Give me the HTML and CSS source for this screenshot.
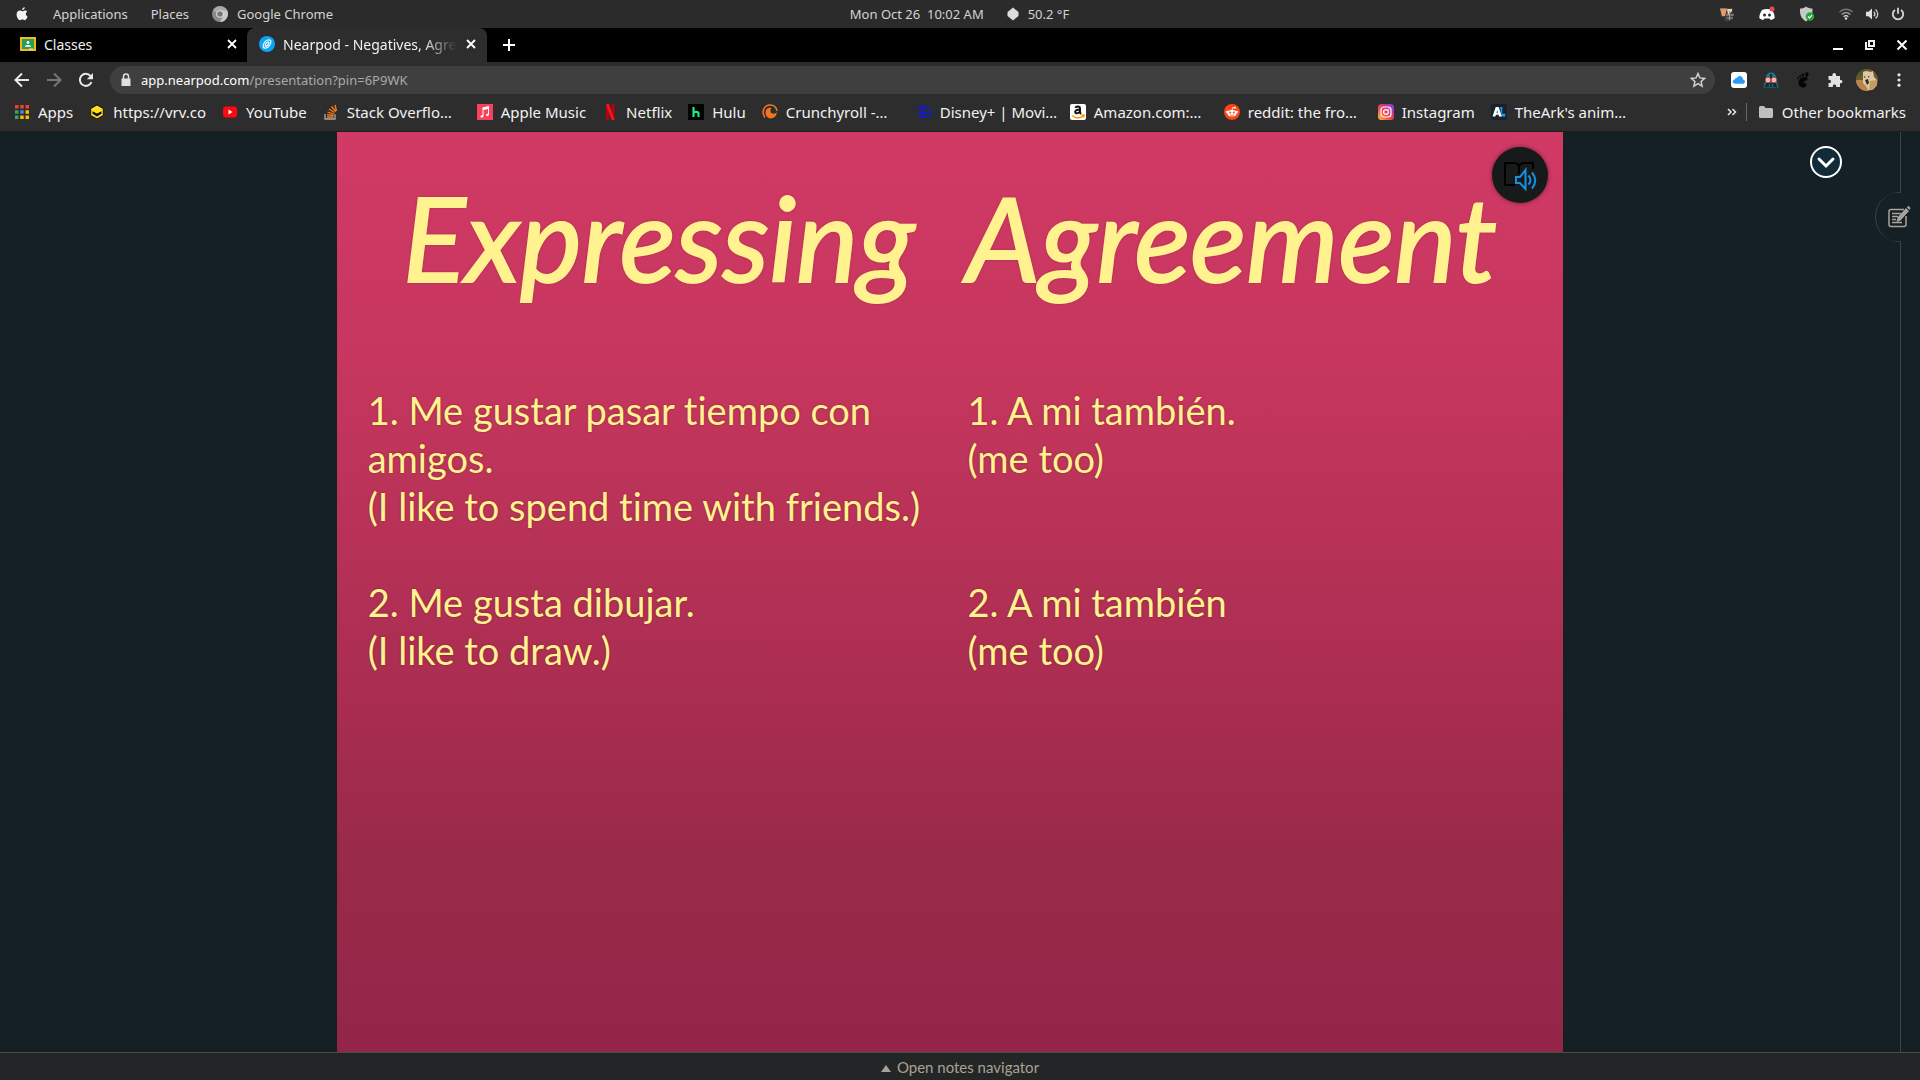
FILE: index.html
```html
<!DOCTYPE html>
<html lang="en">
<head>
<meta charset="utf-8">
<title>Nearpod - Negatives, Agreement</title>
<link rel="stylesheet" href="styles.css">
</head>
<body>
<header>
  <div class="sysbar">
    <nav class="sys-left">
      <svg class="i16" viewBox="0 0 16 16"><path fill="#f2f2f2" d="M10.8 1.2c.1 1.6-1.300 2.900-2.700 2.800C8 2.500 9.300 1.300 10.800 1.200zM13.200 5.600c-1.900 1.200-1.700 4 .4 4.900-.6 1.700-1.700 3.700-2.900 3.700-.9 0-1.200-.6-2.300-.6s-1.500.6-2.300.6C4.300 14.200 2.600 10.900 2.600 8.500c0-2.500 1.600-3.900 3.200-3.900 1.100 0 1.900.7 2.600.7s1.600-.8 2.900-.8c.8 0 1.500.4 1.900 1.100z"/></svg>
      <a href="#">Applications</a>
      <a href="#">Places</a>
      <a href="#" class="current"><svg class="i16" viewBox="0 0 16 16"><circle cx="8" cy="8" r="8" fill="#8b8b8b"/><path fill="#c9c9c9" d="M8 4.200h7a8 8 0 0 1-7 11.800l3.300-6z"/><path fill="#a9a9a9" d="M1.200 4A8 8 0 0 1 15 4.200H8A3.800 3.800 0 0 0 4.500 7z"/><circle cx="8" cy="8" r="3.800" fill="#e0e0e0"/><circle cx="8" cy="8" r="2.800" fill="#777"/></svg>Google Chrome</a>
    </nav>
    <div class="sys-mid">
      <time>Mon Oct 26&nbsp; 10:02 AM</time>
      <span class="weather"><svg class="i14" viewBox="0 0 14 14"><path fill="#ddd" d="M7 .5l3 2.500 2.500 2v4L10 11l-3 2.500L4 11 1.500 9V5L4 3z"/></svg>50.2 °F</span>
    </div>
    <div class="sys-right">
      <svg class="i16" viewBox="0 0 16 16"><path fill="#493e40" d="M1 2h13v9l-2 4H6L5 11H2z"/><path fill="#e59b6b" d="M1 2.500h7L6 10H3z"/><path fill="#f4d1a4" d="M8 3h5v2L9 9z"/><path stroke="#97a5ad" d="M10.500 5v9M7 9h8M8 12h6"/></svg>
      <svg class="i16" viewBox="0 0 16 16"><path fill="#fff" d="M3 4c3-1.500 7-1.500 10 0 1.700 2.500 2.700 5 2.700 8-1.200 1-2.700 1.800-4 2l-1-1.600H5.300l-1 1.600c-1.500-.2-2.800-1-4-2C.4 9 1.300 6.500 3 4z"/><circle cx="5.500" cy="9" r="1.500" fill="#2b2b2b"/><circle cx="10.500" cy="9" r="1.500" fill="#2b2b2b"/><circle cx="13" cy="3" r="2.500" fill="#f04747"/></svg>
      <svg class="i16" viewBox="0 0 16 16"><path fill="#c9c9c9" d="M7 .5c2 1.500 4 2 6.500 2 .3 6-1.500 10-6.500 13C2 12.500.700 8.500 1 2.500c2.500 0 4.500-.5 6-2z"/><circle cx="11" cy="10.500" r="4.200" fill="#1fa83c"/><path d="M9 10.500l1.500 1.500 2.500-2.800" fill="none" stroke="#fff" stroke-width="1.200"/></svg>
      <div class="sys-status">
        <svg class="i14" viewBox="0 0 14 14" fill="none" stroke-width="1.300"><path stroke="#777" d="M.5 5c3.700-3.700 9.300-3.700 13 0"/><path stroke="#aaa" d="M2.700 7.500c2.400-2.400 6.200-2.400 8.600 0"/><path stroke="#ddd" d="M4.700 9.700c1.300-1.200 3.300-1.200 4.600 0"/><circle cx="7" cy="11.500" r="1.200" fill="#ddd"/></svg>
        <svg class="i14" viewBox="0 0 14 14"><path fill="#e0e0e0" d="M1 4.700h2.500L7 1.500v11L3.500 9.300H1z"/><path fill="none" stroke="#d0d0d0" stroke-width="1.300" d="M8.800 4.700c1.400 1.400 1.400 3.200 0 4.600M10.500 2.500c3 2.500 3 6.500 0 9"/></svg>
        <svg class="i14" viewBox="0 0 14 14" fill="none" stroke="#d8d8d8" stroke-width="1.800"><path d="M4 3a5.200 5.200 0 1 0 6 0M7 .7v6"/></svg>
      </div>
    </div>
  </div>

  <div class="tabs">
    <div class="tab">
      <svg class="i16" viewBox="0 0 16 16"><path fill="#f5ba15" d="M0 1h16v14H0z"/><path fill="#2a9d5c" d="M2 3h12v10H2z"/><circle cx="8" cy="6.500" r="1.400" fill="#fff"/><path fill="#fff" d="M4.800 10.800c0-2.500 6.400-2.500 6.400 0z"/><path fill="#e8e8e8" d="M9 12.500h4v1H9z"/></svg>
      <span class="tab-title">Classes</span>
      <button class="icon-btn" aria-label="Close tab"><svg class="i12" viewBox="0 0 12 12"><path stroke="#fff" stroke-width="1.800" d="M2 2l8 8M10 2l-8 8"/></svg></button>
    </div>
    <div class="tab active">
      <svg class="i16" viewBox="0 0 16 16"><circle cx="8" cy="8" r="8" fill="#0ba5f5"/><path fill="none" stroke="#fff" stroke-width="1.200" d="M4.300 11.200C3.600 8.500 6 4.500 8.800 4c1.600-.2 2.800.1 3 1 .6 2.500-2 6.500-4.600 7-1.500.2-2.600 0-2.900-.8zM6.300 10c-.4-1.500 1-3.700 2.500-3.900 1.300-.1 1.200.5 1 1.200-.5 1.500-1.600 2.700-2.600 2.900-.5.100-.8 0-.9-.2z"/></svg>
      <span class="tab-title fade">Nearpod - Negatives, Agre</span>
      <button class="icon-btn" aria-label="Close tab"><svg class="i12" viewBox="0 0 12 12"><path stroke="#fff" stroke-width="1.800" d="M2 2l8 8M10 2l-8 8"/></svg></button>
    </div>
    <button class="icon-btn new-tab" aria-label="New tab"><svg class="i12" viewBox="0 0 12 12"><path stroke="#fff" stroke-width="2" d="M6 0v12M0 6h12"/></svg></button>
    <div class="win">
      <button class="icon-btn" aria-label="Minimize"><svg class="i12" viewBox="0 0 12 12"><path fill="#fff" d="M1 9h10v2H1z"/></svg></button>
      <button class="icon-btn" aria-label="Restore"><svg class="i12" viewBox="0 0 12 12"><path fill="none" stroke="#eee" stroke-width="2" d="M5 2h5v5H5zM2 3v7h7"/></svg></button>
      <button class="icon-btn" aria-label="Close window"><svg class="i12" viewBox="0 0 12 12"><path stroke="#fff" stroke-width="2" d="M1.500 1.500l9 9M10.500 1.500l-9 9"/></svg></button>
    </div>
  </div>

  <div class="toolbar">
    <button class="icon-btn" aria-label="Back"><svg class="i16" viewBox="0 0 16 16" fill="none" stroke="#e8e8e8" stroke-width="2"><path d="M15 8H2.500M8 1.500L1.500 8 8 14.500"/></svg></button>
    <button class="icon-btn" aria-label="Forward"><svg class="i16" viewBox="0 0 16 16" fill="none" stroke="#777" stroke-width="2"><path d="M1 8h12.500M8 1.500L14.500 8 8 14.500"/></svg></button>
    <button class="icon-btn" aria-label="Reload"><svg class="i16" viewBox="0 0 16 16"><path fill="none" stroke="#e8e8e8" stroke-width="2" d="M13.500 10A6 6 0 1 1 12.500 4"/><path fill="#e8e8e8" d="M15 1v6.200H8.800z"/></svg></button>
    <div class="address">
      <svg class="i14" viewBox="0 0 14 14"><path fill="#e0e0e0" d="M2.500 5.500h9V13h-9z"/><path fill="none" stroke="#e0e0e0" stroke-width="1.500" d="M4.500 6V3.500a2.500 2.500 0 0 1 5 0V6"/></svg>
      <a href="#" class="url">app.nearpod.com<span>/presentation?pin=6P9WK</span></a>
      <button class="icon-btn" aria-label="Bookmark this tab"><svg class="i16" viewBox="0 0 16 16"><path fill="none" stroke="#d0d0d0" stroke-width="1.500" d="M8 1.500l1.900 4.400 4.700.5-3.500 3.100 1 4.700L8 11.700l-4.100 2.500 1-4.700L1.400 6.400l4.700-.5z"/></svg></button>
    </div>
    <div class="ext">
      <svg class="i16" viewBox="0 0 16 16"><rect width="16" height="16" rx="3" fill="#fff"/><path fill="#2d9bf5" d="M4.500 11.800C1 11.800 1 8 3.700 7.600 4 6 5.300 5.700 6 6c1.600-3.300 6-2 6 1.400 2.800.4 2.500 4.400-.3 4.400z"/></svg>
      <svg class="i16" viewBox="0 0 16 16"><path fill="#16798a" d="M2.500 7C3 2 5 .5 8 .5S13 2 13.500 7l2 8.500H.500z"/><path fill="#142c36" d="M3 11h10l1.500 4h-13zM7 2h2v4H7z"/><path fill="#16798a" d="M6 12h1v3H6zM9 12h1v3H9z"/><circle cx="5" cy="8" r="3" fill="#e0452f"/><circle cx="11" cy="8" r="3" fill="#e0452f"/><circle cx="5" cy="8" r="1.900" fill="#fff"/><circle cx="11" cy="8" r="1.900" fill="#fff"/><circle cx="5" cy="8" r=".8" fill="#c33"/><circle cx="11" cy="8" r=".8" fill="#c33"/></svg>
      <svg class="i16" viewBox="0 0 16 16" fill="#050505"><path d="M12.500 7c0-3.500-9-2-9 3.500 0 6 8 6.500 8 2.300 0-2.300-2.700-1.300-3-2.800-.2-1.500 4-1 4-3z"/><ellipse cx="11.800" cy="2.600" rx="1.800" ry="2.300"/><ellipse cx="7.900" cy="3" rx="1.100" ry="1.600"/><ellipse cx="5.200" cy="4.300" rx=".9" ry="1.300"/><ellipse cx="3" cy="6.200" rx=".8" ry="1.100"/></svg>
      <svg class="i16" viewBox="0 0 16 16"><path fill="#e2e2e2" d="M1.500 4h4c-1-4 4.500-4 3.500 0h4v4c3.300-.8 3.300 4 0 3.200V15H9.200c.7-3.300-4-3.300-3.300 0H1.500v-4c3.300.8 3.300-4 0-3.200z"/></svg>
      <svg class="avatar" viewBox="0 0 22 22"><clipPath id="av"><circle cx="11" cy="11" r="11"/></clipPath><g clip-path="url(#av)"><path fill="#75572f" d="M0 0h22v22H0z"/><path fill="#466226" d="M0 0h8v5L0 10z"/><path fill="#b98450" d="M0 11h8l5 11H0z"/><path fill="#dcc9a4" d="M7 3l3-1 5 1 2-1 1 6 3 3v10h-9l-2-4-3-3V7z"/><path fill="#c49c66" d="M14 12l7-1v9l-8 1z"/><path fill="#3b2a20" d="M9 11l3-1 1 4-2 2z"/><circle cx="8.700" cy="8" r=".7" fill="#30241d"/><circle cx="12.700" cy="7.700" r=".7" fill="#30241d"/></g></svg>
      <button class="icon-btn" aria-label="Menu"><svg class="i16" viewBox="0 0 16 16" fill="#e8e8e8"><circle cx="8" cy="2.800" r="1.600"/><circle cx="8" cy="8" r="1.600"/><circle cx="8" cy="13.200" r="1.600"/></svg></button>
    </div>
  </div>

  <nav class="bookmarks">
    <a href="#"><svg class="i16" viewBox="0 0 16 16"><path fill="#ea4335" d="M1 1h3.500v3.500H1zM6.200 1h3.500v3.500H6.200zM11.500 1H15v3.500h-3.500z"/><path fill="#34a853" d="M1 6.200h3.500v3.500H1zM1 11.500h3.500V15H1z"/><path fill="#4285f4" d="M6.200 6.200h3.500v3.500H6.200z"/><path fill="#fbbc05" d="M11.500 6.200H15v3.500h-3.500zM6.200 11.500h3.500V15H6.200zM11.500 11.500H15V15h-3.500z"/></svg><span>Apps</span></a>
    <a href="#"><svg class="i16" viewBox="0 0 16 16"><path fill="#fd2" stroke="#111" d="M8 1l6.300 3.500v7L8 15l-6.300-3.500v-7z"/><path fill="#111" d="M3.500 7.300L8 9.500l4.500-2.200v2.400L8 12.400 3.500 9.700z"/></svg><span>https://vrv.co</span></a>
    <a href="#"><svg class="i16" viewBox="0 0 16 16"><rect x="1" y="2.500" width="14" height="11" rx="3" fill="#ff0710"/><path fill="#fff" d="M6.500 5.500v5l4-2.500z"/></svg><span>YouTube</span></a>
    <a href="#" class="long"><svg class="i16" viewBox="0 0 16 16" fill="none"><path stroke="#aaa" stroke-width="1.300" d="M2 10v5h10v-5"/><path stroke="#f48024" stroke-width="1.300" d="M4 13h6.500M4 10.700l6.500.8M4.500 8l6.300 2M6 5l5.500 3.500M8.500 2.500l4.300 5M12 1l1.500 6"/></svg><span>Stack Overflo…</span></a>
    <a href="#"><svg class="i16" viewBox="0 0 16 16"><path fill="#fb405b" d="M0 0h16v16H0z"/><path fill="#fff" d="M5.500 3.500L12 2v8.500c0 2-3 2.200-3 .6 0-1 .8-1.400 2-1.600V5L6.500 6v6c0 2-3 2.200-3 .6 0-1 .8-1.400 2-1.600z"/></svg><span>Apple Music</span></a>
    <a href="#"><svg class="i16" viewBox="0 0 16 16"><path fill="#b1060f" d="M4 0h3v16H4zM9.500 0h3v16h-3z"/><path fill="#f5131d" d="M4 0h3l5.500 16h-3z"/></svg><span>Netflix</span></a>
    <a href="#"><svg class="i16" viewBox="0 0 16 16"><path d="M0 0h16v16H0z"/><path fill="none" stroke="#1ce783" stroke-width="2.200" d="M5.500 3v10M10.500 13V9.300c0-2-5-2-5 0"/></svg><span>Hulu</span></a>
    <a href="#" class="long"><svg class="i16" viewBox="0 0 16 16"><path fill="none" stroke="#f47521" stroke-width="1.600" d="M3 13.500C-1 8 2 1 8 1c4 0 6.500 2.500 7 6"/><path fill="#f47521" d="M9.500 4C4 2.500 1.500 9 5.300 13 9 16.500 15.500 13 14.500 8 14 10 9.500 10.500 8.600 8c-.6-2 .4-3.500.9-4z"/></svg><span>Crunchyroll -…</span></a>
    <a href="#" class="long"><svg class="i16" viewBox="0 0 16 16" fill="none" stroke="#1018dc" stroke-width="1.500"><path d="M1 3.500C5 0 15 4 15 9c0 4.500-11 5-12 2.300C2.500 9 8 8 12 9M3 6l6-.5M7.500 5v8"/></svg><span>Disney+ | Movi…</span></a>
    <a href="#" class="long"><svg class="i16" viewBox="0 0 16 16"><rect width="16" height="16" rx="2" fill="#fff"/><path fill="none" stroke="#111" stroke-width="2" d="M5.500 4c.5-2 4.500-2 4.500.5V8c0 1 .5 1.500 1 2M10 5.500c-3 0-4.800.7-4.800 2.500S9 10 10 7"/><path fill="none" stroke="#f90" stroke-width="1.500" d="M2 11.500c4 3 8 3 11.500.5M11.500 11.300l2.500-.3-.5 2.500"/></svg><span>Amazon.com:…</span></a>
    <a href="#" class="long"><svg class="i16" viewBox="0 0 16 16"><circle cx="8" cy="8" r="8" fill="#ff4516"/><g fill="#fff"><ellipse cx="8" cy="9.300" rx="4.600" ry="3.300"/><circle cx="3.300" cy="8" r="1.300"/><circle cx="12.700" cy="8" r="1.300"/><circle cx="11" cy="3.700" r="1"/></g><path stroke="#fff" fill="none" stroke-width=".8" d="M8 6.500l.6-3 2.400.3"/><circle cx="6.200" cy="8.600" r="1" fill="#ff4516"/><circle cx="9.800" cy="8.600" r="1" fill="#ff4516"/><path stroke="#ff4516" fill="none" stroke-width=".7" d="M6 10.800c1.200.9 2.800.9 4 0"/></svg><span>reddit: the fro…</span></a>
    <a href="#"><svg class="i16" viewBox="0 0 16 16"><linearGradient id="ig" x1="0" y1="1" x2="1" y2="0"><stop offset="0" stop-color="#fdc84b"/><stop offset=".35" stop-color="#f5573b"/><stop offset=".65" stop-color="#cf2f91"/><stop offset="1" stop-color="#6550db"/></linearGradient><rect width="16" height="16" rx="3.500" fill="url(#ig)"/><g fill="none" stroke="#fff" stroke-width="1.200"><rect x="3" y="3" width="10" height="10" rx="3"/><circle cx="8" cy="8" r="2.400"/></g><circle cx="10.900" cy="5.100" r=".7" fill="#fff"/></svg><span>Instagram</span></a>
    <a href="#" class="long"><svg class="i16" viewBox="0 0 16 16"><rect width="16" height="16" rx="2" fill="#19212d"/><path fill="#fff" fill-rule="evenodd" d="M1.500 12.500L4.700 3h3l3.300 9.500H8l-.5-1.700H4.900l-.5 1.700zM5.500 8.700h1.400l-.7-2.500z"/><path fill="#02a9ff" d="M9 3h2.300v6.800h3v2.700h-3z"/></svg><span>TheArk's anim…</span></a>
    <div class="book-end">
      <button class="icon-btn" aria-label="More bookmarks"><svg class="i12" viewBox="0 0 12 12"><path fill="none" stroke="#e8e8e8" stroke-width="1.500" d="M2 3l3 3-3 3M6.500 3l3 3-3 3"/></svg></button>
      <a href="#" class="other"><svg class="i16" viewBox="0 0 16 16"><path fill="#bfbfbf" d="M1 3.500Q1 2 2.500 2H6l1.500 2h6Q15 4 15 5.500v7q0 1.500-1.500 1.500h-11Q1 14 1 12.500z"/></svg><span>Other bookmarks</span></a>
    </div>
  </nav>
</header>

<main>
  <div class="stage">
    <article class="slide">
      <h1>Expressing&nbsp; Agreement</h1>
      <div class="cols">
        <div>
          <p>1. Me gustar pasar tiempo con<br>amigos.<br>(I like to spend time with friends.)</p>
          <p>2. Me gusta dibujar.<br>(I like to draw.)</p>
        </div>
        <div>
          <p>1. A mi también.<br>(me too)<br>&nbsp;</p>
          <p>2. A mi también<br>(me too)</p>
        </div>
      </div>
      <button class="reader" aria-label="Immersive reader"><svg viewBox="0 0 56 56" fill="none"><path stroke="#000" stroke-width="2" d="M23 38H13V16h9q5 0 5 5v6M27 21q0-5 5-5h9v6"/><path stroke="#1492e0" stroke-width="2" d="M24 30h4l5.500-7v19L28 36h-4zM36.500 28.500q4 4.500 0 9M40 25.500q6.500 8 0 16"/></svg></button>
    </article>
    <button class="collapse" aria-label="Collapse"><svg viewBox="0 0 32 32" fill="none" stroke="#fff"><circle cx="16" cy="16" r="15" fill="#122b39" stroke-width="2"/><path stroke-width="3" stroke-linecap="round" d="M9 13l7 7 7-7"/></svg></button>
  </div>
  <aside class="rail">
    <button class="notes" aria-label="Notes"><svg viewBox="0 2 28 28" fill="none" stroke="#aaa39a"><path stroke-width="1.500" d="M20 8.500H7q-2 0-2 2v13q0 2 2 2h13q2 0 2-2V15"/><path stroke-width="1.500" d="M8 12.500h9M8 15.500h6M8 18.500h4M8 21.500h10"/><path fill="#aaa39a" stroke="none" d="M22 7l3 3-8.500 9.500-4 1.500 1-4.500zM22.800 6.200l1.500-1.200q1.500.2 2.200 2.300L25.500 9z"/></svg></button>
  </aside>
</main>

<footer><button class="navigator"><svg viewBox="0 0 10 7"><path fill="#aaa193" d="M5 0l5 7H0z"/></svg>Open notes navigator</button></footer>
</body>
</html>
```
FILE: styles.css
```css
* { box-sizing: border-box; }
body {
  margin: 0;
  height: 100vh;
  display: flex;
  flex-direction: column;
  overflow: hidden;
  background: #152025;
  color: #f2f2f2;
  font-family: "Noto Sans", sans-serif;
  font-size: 14px;
}
a { color: inherit; text-decoration: none; }
button { font: inherit; color: inherit; }
svg { display: block; flex: none; }
.i12 { width: 12px; height: 12px; }
.i14 { width: 14px; height: 14px; }
.i16 { width: 16px; height: 16px; }
.icon-btn { display: flex; padding: 0; border: 0; background: none; flex: none; }

.sysbar {
  display: grid;
  grid-template-columns: 1fr auto 1fr;
  align-items: center;
  height: 28px;
  padding: 0 15px 0 14px;
  background: #2b2b2b;
  color: #d3d3d3;
  font-size: 13px;
}
.sys-left, .sys-mid, .sys-right, .sys-status, .current, .weather { display: flex; align-items: center; }
.sys-left { gap: 23px; }
.current { gap: 9px; }
.sys-mid { gap: 22px; }
.weather { gap: 8px; }
.sys-right { justify-content: flex-end; gap: 24px; }
.sys-status { gap: 12px; }

.tabs { display: flex; align-items: center; height: 34px; background: #000; }
.tab {
  display: flex;
  align-items: center;
  gap: 8px;
  width: 240px;
  height: 34px;
  padding: 0 10px 2px 12px;
}
.tab:first-child { width: 247px; padding: 0 9px 2px 20px; }
.tab.active { background: #2d2d2d; border-radius: 8px 8px 0 0; }
.tab-title { flex: 1; min-width: 0; white-space: nowrap; }
.fade { -webkit-mask-image: linear-gradient(90deg, #000 80%, transparent); mask-image: linear-gradient(90deg, #000 80%, transparent); }
.new-tab { margin-left: 16px; }
.win { display: flex; gap: 20px; margin-left: auto; padding-right: 12px; }

.toolbar { display: flex; align-items: center; gap: 16px; height: 36px; padding: 0 13px 0 14px; background: #2d2d2d; }
.address {
  flex: 1;
  display: flex;
  align-items: center;
  gap: 8px;
  height: 28px;
  padding: 0 9px;
  border-radius: 14px;
  background: #3f3f3f;
}
.url { flex: 1; color: #fff; font-size: 13px; }
.url span { color: #aaa; }
.ext { display: flex; align-items: center; gap: 16px; }
.avatar { width: 22px; height: 22px; margin: 0 -3px; }

.bookmarks {
  display: flex;
  align-items: center;
  gap: 16px;
  height: 34px;
  padding: 0 14px 5px;
  background: #2d2d2d;
  border-bottom: 1px solid #1d1d1d;
  font-size: 15px;
  line-height: 18px;
  white-space: nowrap;
}
.bookmarks a { display: flex; align-items: center; gap: 8px; }
.bookmarks .long { width: 138px; }
.book-end { display: flex; align-items: center; gap: 8px; margin-left: auto; }
.bookmarks .other { padding-left: 11px; border-left: 1px solid #666; }

main { flex: 1; display: flex; min-height: 0; }
.stage { position: relative; flex: 1; display: flex; justify-content: center; }
.slide {
  position: relative;
  height: 100%;
  aspect-ratio: 4 / 3;
  background: linear-gradient(#d13a65 0%, #c5365d 27%, #a92d51 62%, #9a2a49 78%, #932648 100%);
  color: #fff28f;
}
.slide h1 {
  margin: 41px 0 0;
  font: italic 400 117px/128px Lato, sans-serif;
  text-align: center;
  white-space: nowrap;
  -webkit-text-stroke: 2px #fff28f;
  text-shadow: 0 0 3px rgba(80, 20, 30, .6);
}
.cols {
  display: grid;
  grid-template-columns: 1fr 1fr;
  column-gap: 4px;
  padding: 85px 0 0 31px;
  font: 38px/48px Lato, sans-serif;
  font-variant-ligatures: none;
  white-space: nowrap;
  text-shadow: 0 0 2px rgba(80, 20, 30, .5);
}
.cols p { margin: 0 0 48px; }
.reader, .collapse, .notes { position: absolute; padding: 0; border: 0; background: none; }
.reader {
  top: 15px;
  right: 15px;
  width: 56px;
  height: 56px;
  border-radius: 50%;
  background: #17191b;
  box-shadow: 0 0 4px rgba(0, 0, 0, .5);
}
.collapse { top: 14px; right: 58px; width: 32px; height: 32px; }
.rail { position: relative; width: 20px; border-left: 1px solid #3c4245; }
.notes {
  top: 60px;
  left: -26px;
  width: 46px;
  height: 50px;
  background: linear-gradient(#3c4245, #3c4245) 0 0 / 25px 1px no-repeat, linear-gradient(#3c4245, #3c4245) 0 100% / 25px 1px no-repeat, #152025;
  border-left: 1px solid #3c4245;
  border-radius: 25px 0 0 25px;
}
.notes svg { width: 28px; height: 28px; margin-left: 8px; }

footer {
  display: flex;
  justify-content: center;
  height: 28px;
  background: #232627;
  border-top: 1px solid #45494a;
}
.navigator {
  display: flex;
  align-items: center;
  gap: 6px;
  padding: 0;
  border: 0;
  background: none;
  color: #aaa193;
  font: 15px/20px Lato, sans-serif;
}
.navigator svg { width: 10px; height: 7px; margin-top: 4px; }
```
